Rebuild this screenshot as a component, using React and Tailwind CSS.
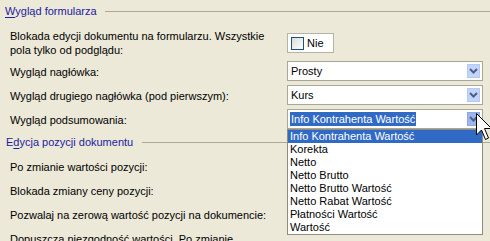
const LINE = "bg-[#ACA899]";

function SectionHeader({ children, pad, h = "h-[22px]", gap = "ml-[8px]" }) {
  return (
    <div className={`flex items-center ${h} ${pad}`}>
      <span className="text-[#2121A0] leading-[13px] whitespace-nowrap">{children}</span>
      <div className={`flex-1 h-px ${gap} ${LINE}`}></div>
    </div>
  );
}

function Row({ label, children, h = "h-[24px]", labelPad = "pt-[8px]", ctrlPad = "pt-[3px]" }) {
  return (
    <div className={`flex pl-[10px] ${h}`}>
      <div className={`w-[277px] shrink-0 leading-[13px] whitespace-nowrap ${labelPad}`}>{label}</div>
      <div className={`w-[196px] shrink-0 ${ctrlPad}`}>{children}</div>
    </div>
  );
}

const Chevron = () => (
  <svg width="9" height="6" viewBox="0 0 9 6">
    <path d="M1 1 L4.5 4.5 L8 1" fill="none" stroke="#4D6185" strokeWidth="2" />
  </svg>
);

function Combo({ value, selected, pressed, children }) {
  return (
    <div className="relative">
      <div className="flex items-center h-[20px] bg-white border border-[#A9A797] pl-[2px] pr-[2px]">
        <div className="flex-1 min-w-0 flex">
          {selected ? (
            <span className="bg-[#316AC5] text-white leading-[14px] px-[1px]">{value}</span>
          ) : (
            <span className="leading-[14px] px-[1px]">{value}</span>
          )}
        </div>
        <div
          className={`w-[13px] h-[14px] flex items-center justify-center border ${
            pressed ? "bg-[#9DB5EE] border-[#8EA7E4]" : "bg-[#C3D4FC] border-[#B6C8F5]"
          }`}
        >
          <Chevron />
        </div>
      </div>
      {children}
    </div>
  );
}

const options = [
  "Info Kontrahenta Wartość",
  "Korekta",
  "Netto",
  "Netto Brutto",
  "Netto Brutto Wartość",
  "Netto Rabat Wartość",
  "Płatności Wartość",
  "Wartość",
];

export default function App() {
  return (
    <div className="relative w-[490px] h-[241px] overflow-hidden bg-[#ECE9D8] text-black text-[11px] font-['Liberation_Sans',Arial,sans-serif]">
      <SectionHeader pad="pl-[5px]">
        <span className="underline underline-offset-2">W</span>ygląd formularza
      </SectionHeader>

      <Row
        h="h-[36px]"
        labelPad="pt-[7px] leading-[14px]"
        ctrlPad="pt-[11px]"
        label={
          <>
            Blokada edycji dokumentu na formularzu. Wszystkie
            <br />
            pola tylko od podglądu:
          </>
        }
      >
        <div className="w-[47px] h-[20px] bg-white border border-[#B5B3A5] flex items-center pl-[3px] gap-[3px]">
          <div className="w-[13px] h-[13px] border border-[#1C5180] bg-gradient-to-br from-[#DCDCD7] to-white"></div>
          <span className="leading-[13px]">Nie</span>
        </div>
      </Row>

      <Row label="Wygląd nagłówka:">
        <Combo value="Prosty" />
      </Row>
      <Row label="Wygląd drugiego nagłówka (pod pierwszym):">
        <Combo value="Kurs" />
      </Row>
      <Row label="Wygląd podsumowania:">
        <Combo value="Info Kontrahenta Wartość" selected pressed>
          <div className="absolute left-0 top-full w-full z-10 bg-white border border-[#8F8D80] leading-[13px]">
            {options.map((o, i) => (
              <div
                key={o}
                className={`h-[13px] pl-[2px] whitespace-nowrap ${i === 0 ? "bg-[#316AC5] text-white" : ""}`}
              >
                {o}
              </div>
            ))}
          </div>
        </Combo>
      </Row>

      <div className="pt-[1px]">
        <SectionHeader pad="pl-[6px]" h="h-[23px]" gap="ml-[9px]">
          E<span className="underline underline-offset-2">d</span>ycja pozycji dokumentu
        </SectionHeader>
      </div>

      <Row label="Po zmianie wartości pozycji:" labelPad="pt-[7px]" />
      <Row label="Blokada zmiany ceny pozycji:" labelPad="pt-[7px]" />
      <Row label="Pozwalaj na zerową wartość pozycji na dokumencie:" labelPad="pt-[7px]" />
      <Row label="Dopuszcza niezgodność wartości. Po zmianie" labelPad="pt-[7px]" />

      <svg className="absolute left-[476px] top-[113px] z-20" width="17" height="28" viewBox="0 0 17 28">
        <path
          d="M0.5 0.5 L0.5 22 L5.5 17 L9.5 26.5 L12.5 25 L8.5 15.5 L15.5 15.5 Z"
          fill="white"
          stroke="black"
          strokeWidth="1"
          strokeLinejoin="miter"
        />
      </svg>
    </div>
  );
}
